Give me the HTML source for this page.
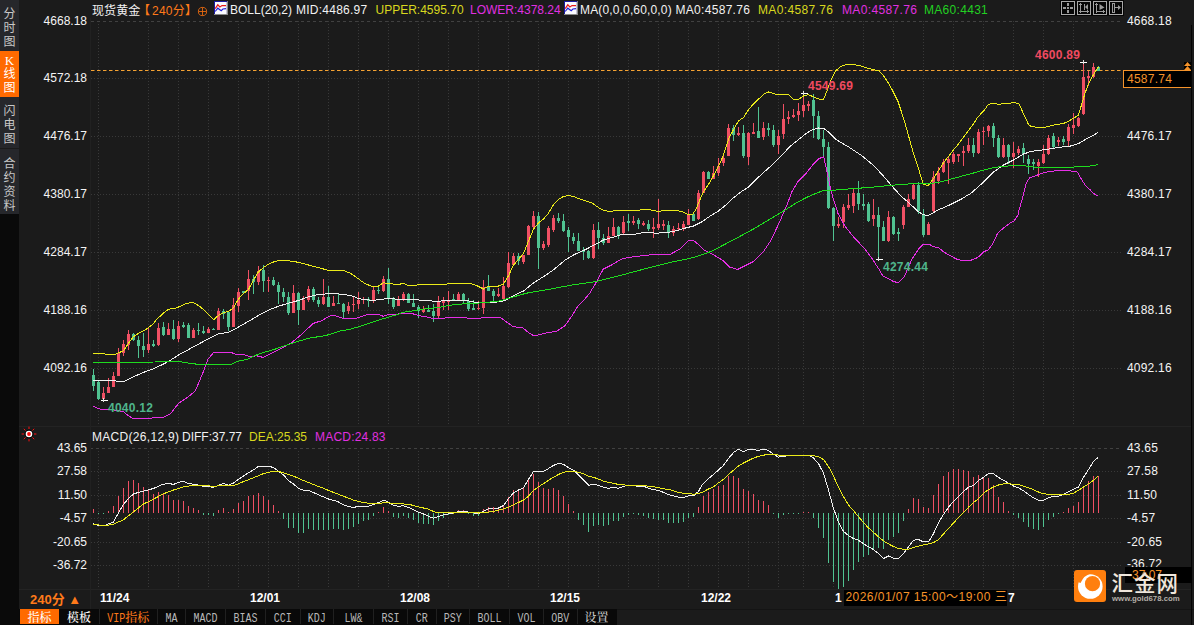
<!DOCTYPE html>
<html><head><meta charset="utf-8">
<style>
html,body{margin:0;padding:0;background:#1b1b1b;}
body{width:1194px;height:625px;position:relative;overflow:hidden;font-family:"Liberation Sans","Noto Sans CJK SC",sans-serif;font-size:12px;color:#f2f2f2;}
.a{position:absolute;white-space:nowrap;line-height:14px;}
.side{position:absolute;left:0;width:19px;background:#26272b;color:#c8c8c8;}
.side span{position:absolute;left:3.5px;width:12px;font-size:12px;line-height:14px;text-align:center;}
.lab{position:absolute;white-space:nowrap;font-size:12px;line-height:12px;color:#f4f4f4;}
.ll{width:87px;left:0;text-align:right;}
.rl{left:1127px;letter-spacing:0.2px;}
.hdr{position:absolute;top:3px;height:15px;line-height:15px;white-space:nowrap;font-size:12px;}
.tab{position:absolute;top:609px;height:15px;color:#b8b8b8;font-size:12px;line-height:15px;text-align:center;white-space:nowrap;}
.cj{font-family:"Noto Serif CJK SC","Noto Sans CJK SC",serif;font-size:12px;font-weight:500;display:inline-block;}
.ms{font-family:"Liberation Mono",monospace;font-size:10px;display:inline-block;position:relative;top:0px;transform:scale(1,1.25);transform-origin:50% 60%;}
.date{position:absolute;top:591px;font-weight:bold;font-size:12px;line-height:14px;color:#fff;}
.mk{position:absolute;font-weight:bold;font-size:12px;line-height:12px;white-space:nowrap;letter-spacing:0.25px;}
</style></head><body>
<svg width="1194" height="625" viewBox="0 0 1194 625" style="position:absolute;left:0;top:0" shape-rendering="crispEdges">
<g stroke="#393939" stroke-width="1" stroke-dasharray="1 2" fill="none">
<line x1="98.5" y1="21" x2="98.5" y2="424"/>
<line x1="98.5" y1="451" x2="98.5" y2="588"/>
<line x1="148.5" y1="21" x2="148.5" y2="424"/>
<line x1="148.5" y1="451" x2="148.5" y2="588"/>
<line x1="178.5" y1="21" x2="178.5" y2="424"/>
<line x1="178.5" y1="451" x2="178.5" y2="588"/>
<line x1="208.5" y1="21" x2="208.5" y2="424"/>
<line x1="208.5" y1="451" x2="208.5" y2="588"/>
<line x1="238.5" y1="21" x2="238.5" y2="424"/>
<line x1="238.5" y1="451" x2="238.5" y2="588"/>
<line x1="268.5" y1="21" x2="268.5" y2="424"/>
<line x1="268.5" y1="451" x2="268.5" y2="588"/>
<line x1="298.5" y1="21" x2="298.5" y2="424"/>
<line x1="298.5" y1="451" x2="298.5" y2="588"/>
<line x1="328.5" y1="21" x2="328.5" y2="424"/>
<line x1="328.5" y1="451" x2="328.5" y2="588"/>
<line x1="358.5" y1="21" x2="358.5" y2="424"/>
<line x1="358.5" y1="451" x2="358.5" y2="588"/>
<line x1="388.5" y1="21" x2="388.5" y2="424"/>
<line x1="388.5" y1="451" x2="388.5" y2="588"/>
<line x1="418.5" y1="21" x2="418.5" y2="424"/>
<line x1="418.5" y1="451" x2="418.5" y2="588"/>
<line x1="448.5" y1="21" x2="448.5" y2="424"/>
<line x1="448.5" y1="451" x2="448.5" y2="588"/>
<line x1="478.5" y1="21" x2="478.5" y2="424"/>
<line x1="478.5" y1="451" x2="478.5" y2="588"/>
<line x1="508.5" y1="21" x2="508.5" y2="424"/>
<line x1="508.5" y1="451" x2="508.5" y2="588"/>
<line x1="538.5" y1="21" x2="538.5" y2="424"/>
<line x1="538.5" y1="451" x2="538.5" y2="588"/>
<line x1="568.5" y1="21" x2="568.5" y2="424"/>
<line x1="568.5" y1="451" x2="568.5" y2="588"/>
<line x1="598.5" y1="21" x2="598.5" y2="424"/>
<line x1="598.5" y1="451" x2="598.5" y2="588"/>
<line x1="628.5" y1="21" x2="628.5" y2="424"/>
<line x1="628.5" y1="451" x2="628.5" y2="588"/>
<line x1="658.5" y1="21" x2="658.5" y2="424"/>
<line x1="658.5" y1="451" x2="658.5" y2="588"/>
<line x1="688.5" y1="21" x2="688.5" y2="424"/>
<line x1="688.5" y1="451" x2="688.5" y2="588"/>
<line x1="718.5" y1="21" x2="718.5" y2="424"/>
<line x1="718.5" y1="451" x2="718.5" y2="588"/>
<line x1="748.5" y1="21" x2="748.5" y2="424"/>
<line x1="748.5" y1="451" x2="748.5" y2="588"/>
<line x1="778.5" y1="21" x2="778.5" y2="424"/>
<line x1="778.5" y1="451" x2="778.5" y2="588"/>
<line x1="803.5" y1="21" x2="803.5" y2="424"/>
<line x1="803.5" y1="451" x2="803.5" y2="588"/>
<line x1="833.5" y1="21" x2="833.5" y2="424"/>
<line x1="833.5" y1="451" x2="833.5" y2="588"/>
<line x1="863.5" y1="21" x2="863.5" y2="424"/>
<line x1="863.5" y1="451" x2="863.5" y2="588"/>
<line x1="893.5" y1="21" x2="893.5" y2="424"/>
<line x1="893.5" y1="451" x2="893.5" y2="588"/>
<line x1="923.5" y1="21" x2="923.5" y2="424"/>
<line x1="923.5" y1="451" x2="923.5" y2="588"/>
<line x1="953.5" y1="21" x2="953.5" y2="424"/>
<line x1="953.5" y1="451" x2="953.5" y2="588"/>
<line x1="983.5" y1="21" x2="983.5" y2="424"/>
<line x1="983.5" y1="451" x2="983.5" y2="588"/>
<line x1="1013.5" y1="21" x2="1013.5" y2="424"/>
<line x1="1013.5" y1="451" x2="1013.5" y2="588"/>
<line x1="1043.5" y1="21" x2="1043.5" y2="424"/>
<line x1="1043.5" y1="451" x2="1043.5" y2="588"/>
<line x1="1073.5" y1="21" x2="1073.5" y2="424"/>
<line x1="1073.5" y1="451" x2="1073.5" y2="588"/>
<line x1="91" y1="78.5" x2="1122" y2="78.5"/>
<line x1="91" y1="136.5" x2="1122" y2="136.5"/>
<line x1="91" y1="194.5" x2="1122" y2="194.5"/>
<line x1="91" y1="252.5" x2="1122" y2="252.5"/>
<line x1="91" y1="310.5" x2="1122" y2="310.5"/>
<line x1="91" y1="368.5" x2="1122" y2="368.5"/>
<line x1="91" y1="471.5" x2="1122" y2="471.5"/>
<line x1="91" y1="495.5" x2="1122" y2="495.5"/>
<line x1="91" y1="518.5" x2="1122" y2="518.5"/>
<line x1="91" y1="542.5" x2="1122" y2="542.5"/>
<line x1="91" y1="565.5" x2="1122" y2="565.5"/>
</g>
<g stroke="#414141" stroke-width="1" stroke-dasharray="3 3" fill="none">
<line x1="91" y1="21.5" x2="1122" y2="21.5"/>
<line x1="90" y1="448.5" x2="1122" y2="448.5"/>
</g>
<g stroke="#232323" stroke-width="1" fill="none">
<line x1="19" y1="426.5" x2="1191" y2="426.5"/>
<line x1="19" y1="589.5" x2="1191" y2="589.5"/>
<line x1="19" y1="609.5" x2="1194" y2="609.5" stroke="#141414"/>
<line x1="90.5" y1="18" x2="90.5" y2="609" stroke="#212121"/>
</g>
<line x1="91" y1="70.5" x2="1124" y2="70.5" stroke="#f5a232" stroke-width="1" stroke-dasharray="3.5 2.5" shape-rendering="auto"/>
<rect x="93" y="509" width="1" height="4" fill="#f05064"/>
<rect x="98" y="513" width="1" height="1" fill="#50c391"/>
<rect x="103" y="513" width="1" height="1" fill="#50c391"/>
<rect x="108" y="511" width="1" height="2" fill="#f05064"/>
<rect x="113" y="506" width="1" height="7" fill="#f05064"/>
<rect x="118" y="496" width="1" height="17" fill="#f05064"/>
<rect x="123" y="488" width="1" height="25" fill="#f05064"/>
<rect x="128" y="481" width="1" height="32" fill="#f05064"/>
<rect x="133" y="480" width="1" height="33" fill="#f05064"/>
<rect x="138" y="483" width="1" height="30" fill="#f05064"/>
<rect x="143" y="487" width="1" height="26" fill="#f05064"/>
<rect x="148" y="490" width="1" height="23" fill="#f05064"/>
<rect x="153" y="494" width="1" height="19" fill="#f05064"/>
<rect x="158" y="492" width="1" height="21" fill="#f05064"/>
<rect x="163" y="494" width="1" height="19" fill="#f05064"/>
<rect x="168" y="495" width="1" height="18" fill="#f05064"/>
<rect x="173" y="500" width="1" height="13" fill="#f05064"/>
<rect x="178" y="500" width="1" height="13" fill="#f05064"/>
<rect x="183" y="501" width="1" height="12" fill="#f05064"/>
<rect x="188" y="506" width="1" height="7" fill="#f05064"/>
<rect x="193" y="508" width="1" height="5" fill="#f05064"/>
<rect x="198" y="510" width="1" height="3" fill="#f05064"/>
<rect x="203" y="513" width="1" height="2" fill="#50c391"/>
<rect x="208" y="513" width="1" height="2" fill="#50c391"/>
<rect x="213" y="513" width="1" height="3" fill="#50c391"/>
<rect x="218" y="510" width="1" height="3" fill="#f05064"/>
<rect x="223" y="508" width="1" height="5" fill="#f05064"/>
<rect x="228" y="512" width="1" height="1" fill="#f05064"/>
<rect x="233" y="509" width="1" height="4" fill="#f05064"/>
<rect x="238" y="503" width="1" height="10" fill="#f05064"/>
<rect x="243" y="501" width="1" height="12" fill="#f05064"/>
<rect x="248" y="496" width="1" height="17" fill="#f05064"/>
<rect x="253" y="495" width="1" height="18" fill="#f05064"/>
<rect x="258" y="493" width="1" height="20" fill="#f05064"/>
<rect x="263" y="496" width="1" height="17" fill="#f05064"/>
<rect x="268" y="500" width="1" height="13" fill="#f05064"/>
<rect x="273" y="505" width="1" height="8" fill="#f05064"/>
<rect x="278" y="511" width="1" height="2" fill="#f05064"/>
<rect x="283" y="513" width="1" height="6" fill="#50c391"/>
<rect x="288" y="513" width="1" height="15" fill="#50c391"/>
<rect x="293" y="513" width="1" height="15" fill="#50c391"/>
<rect x="298" y="513" width="1" height="20" fill="#50c391"/>
<rect x="303" y="513" width="1" height="20" fill="#50c391"/>
<rect x="308" y="513" width="1" height="16" fill="#50c391"/>
<rect x="313" y="513" width="1" height="17" fill="#50c391"/>
<rect x="318" y="513" width="1" height="17" fill="#50c391"/>
<rect x="323" y="513" width="1" height="17" fill="#50c391"/>
<rect x="328" y="513" width="1" height="17" fill="#50c391"/>
<rect x="333" y="513" width="1" height="16" fill="#50c391"/>
<rect x="338" y="513" width="1" height="16" fill="#50c391"/>
<rect x="343" y="513" width="1" height="17" fill="#50c391"/>
<rect x="348" y="513" width="1" height="16" fill="#50c391"/>
<rect x="353" y="513" width="1" height="14" fill="#50c391"/>
<rect x="358" y="513" width="1" height="11" fill="#50c391"/>
<rect x="363" y="513" width="1" height="8" fill="#50c391"/>
<rect x="368" y="513" width="1" height="7" fill="#50c391"/>
<rect x="373" y="513" width="1" height="3" fill="#50c391"/>
<rect x="378" y="512" width="1" height="1" fill="#f05064"/>
<rect x="383" y="507" width="1" height="6" fill="#f05064"/>
<rect x="388" y="511" width="1" height="2" fill="#f05064"/>
<rect x="393" y="513" width="1" height="4" fill="#50c391"/>
<rect x="398" y="513" width="1" height="5" fill="#50c391"/>
<rect x="403" y="513" width="1" height="3" fill="#50c391"/>
<rect x="408" y="513" width="1" height="5" fill="#50c391"/>
<rect x="413" y="513" width="1" height="7" fill="#50c391"/>
<rect x="418" y="513" width="1" height="10" fill="#50c391"/>
<rect x="423" y="513" width="1" height="11" fill="#50c391"/>
<rect x="428" y="513" width="1" height="11" fill="#50c391"/>
<rect x="433" y="513" width="1" height="12" fill="#50c391"/>
<rect x="438" y="513" width="1" height="8" fill="#50c391"/>
<rect x="443" y="513" width="1" height="5" fill="#50c391"/>
<rect x="448" y="513" width="1" height="2" fill="#50c391"/>
<rect x="453" y="513" width="1" height="1" fill="#50c391"/>
<rect x="458" y="510" width="1" height="3" fill="#f05064"/>
<rect x="463" y="510" width="1" height="3" fill="#f05064"/>
<rect x="468" y="513" width="1" height="1" fill="#50c391"/>
<rect x="473" y="513" width="1" height="3" fill="#50c391"/>
<rect x="478" y="513" width="1" height="3" fill="#50c391"/>
<rect x="483" y="509" width="1" height="4" fill="#f05064"/>
<rect x="488" y="507" width="1" height="6" fill="#f05064"/>
<rect x="493" y="507" width="1" height="6" fill="#f05064"/>
<rect x="498" y="507" width="1" height="6" fill="#f05064"/>
<rect x="503" y="505" width="1" height="8" fill="#f05064"/>
<rect x="508" y="497" width="1" height="16" fill="#f05064"/>
<rect x="513" y="490" width="1" height="23" fill="#f05064"/>
<rect x="518" y="491" width="1" height="22" fill="#f05064"/>
<rect x="523" y="488" width="1" height="25" fill="#f05064"/>
<rect x="528" y="480" width="1" height="33" fill="#f05064"/>
<rect x="533" y="474" width="1" height="39" fill="#f05064"/>
<rect x="538" y="482" width="1" height="31" fill="#f05064"/>
<rect x="543" y="488" width="1" height="25" fill="#f05064"/>
<rect x="548" y="489" width="1" height="24" fill="#f05064"/>
<rect x="553" y="488" width="1" height="25" fill="#f05064"/>
<rect x="558" y="490" width="1" height="23" fill="#f05064"/>
<rect x="563" y="496" width="1" height="17" fill="#f05064"/>
<rect x="568" y="504" width="1" height="9" fill="#f05064"/>
<rect x="573" y="511" width="1" height="2" fill="#f05064"/>
<rect x="578" y="513" width="1" height="7" fill="#50c391"/>
<rect x="583" y="513" width="1" height="12" fill="#50c391"/>
<rect x="588" y="513" width="1" height="19" fill="#50c391"/>
<rect x="593" y="513" width="1" height="13" fill="#50c391"/>
<rect x="598" y="513" width="1" height="12" fill="#50c391"/>
<rect x="603" y="513" width="1" height="13" fill="#50c391"/>
<rect x="608" y="513" width="1" height="12" fill="#50c391"/>
<rect x="613" y="513" width="1" height="8" fill="#50c391"/>
<rect x="618" y="513" width="1" height="8" fill="#50c391"/>
<rect x="623" y="513" width="1" height="4" fill="#50c391"/>
<rect x="628" y="513" width="1" height="2" fill="#50c391"/>
<rect x="633" y="513" width="1" height="1" fill="#50c391"/>
<rect x="638" y="513" width="1" height="2" fill="#50c391"/>
<rect x="643" y="513" width="1" height="3" fill="#50c391"/>
<rect x="648" y="513" width="1" height="5" fill="#50c391"/>
<rect x="653" y="513" width="1" height="6" fill="#50c391"/>
<rect x="658" y="513" width="1" height="7" fill="#50c391"/>
<rect x="663" y="513" width="1" height="7" fill="#50c391"/>
<rect x="668" y="513" width="1" height="10" fill="#50c391"/>
<rect x="673" y="513" width="1" height="10" fill="#50c391"/>
<rect x="678" y="513" width="1" height="10" fill="#50c391"/>
<rect x="683" y="513" width="1" height="9" fill="#50c391"/>
<rect x="688" y="513" width="1" height="5" fill="#50c391"/>
<rect x="693" y="513" width="1" height="4" fill="#50c391"/>
<rect x="698" y="507" width="1" height="6" fill="#f05064"/>
<rect x="703" y="496" width="1" height="17" fill="#f05064"/>
<rect x="708" y="492" width="1" height="21" fill="#f05064"/>
<rect x="713" y="489" width="1" height="24" fill="#f05064"/>
<rect x="718" y="486" width="1" height="27" fill="#f05064"/>
<rect x="723" y="485" width="1" height="28" fill="#f05064"/>
<rect x="728" y="476" width="1" height="37" fill="#f05064"/>
<rect x="733" y="476" width="1" height="37" fill="#f05064"/>
<rect x="738" y="478" width="1" height="35" fill="#f05064"/>
<rect x="743" y="489" width="1" height="24" fill="#f05064"/>
<rect x="748" y="491" width="1" height="22" fill="#f05064"/>
<rect x="753" y="494" width="1" height="19" fill="#f05064"/>
<rect x="758" y="500" width="1" height="13" fill="#f05064"/>
<rect x="763" y="501" width="1" height="12" fill="#f05064"/>
<rect x="768" y="505" width="1" height="8" fill="#f05064"/>
<rect x="773" y="513" width="1" height="1" fill="#50c391"/>
<rect x="778" y="513" width="1" height="5" fill="#50c391"/>
<rect x="783" y="513" width="1" height="2" fill="#50c391"/>
<rect x="788" y="513" width="1" height="1" fill="#50c391"/>
<rect x="793" y="513" width="1" height="1" fill="#50c391"/>
<rect x="798" y="513" width="1" height="1" fill="#50c391"/>
<rect x="803" y="512" width="1" height="1" fill="#f05064"/>
<rect x="808" y="512" width="1" height="1" fill="#f05064"/>
<rect x="813" y="513" width="1" height="5" fill="#50c391"/>
<rect x="818" y="513" width="1" height="15" fill="#50c391"/>
<rect x="823" y="513" width="1" height="25" fill="#50c391"/>
<rect x="828" y="513" width="1" height="50" fill="#50c391"/>
<rect x="833" y="513" width="1" height="69" fill="#50c391"/>
<rect x="838" y="513" width="1" height="76" fill="#50c391"/>
<rect x="843" y="513" width="1" height="74" fill="#50c391"/>
<rect x="848" y="513" width="1" height="68" fill="#50c391"/>
<rect x="853" y="513" width="1" height="57" fill="#50c391"/>
<rect x="858" y="513" width="1" height="49" fill="#50c391"/>
<rect x="863" y="513" width="1" height="44" fill="#50c391"/>
<rect x="868" y="513" width="1" height="42" fill="#50c391"/>
<rect x="873" y="513" width="1" height="36" fill="#50c391"/>
<rect x="878" y="513" width="1" height="35" fill="#50c391"/>
<rect x="883" y="513" width="1" height="36" fill="#50c391"/>
<rect x="888" y="513" width="1" height="27" fill="#50c391"/>
<rect x="893" y="513" width="1" height="24" fill="#50c391"/>
<rect x="898" y="513" width="1" height="20" fill="#50c391"/>
<rect x="903" y="513" width="1" height="8" fill="#50c391"/>
<rect x="908" y="509" width="1" height="4" fill="#f05064"/>
<rect x="913" y="498" width="1" height="15" fill="#f05064"/>
<rect x="918" y="499" width="1" height="14" fill="#f05064"/>
<rect x="923" y="507" width="1" height="6" fill="#f05064"/>
<rect x="928" y="508" width="1" height="5" fill="#f05064"/>
<rect x="933" y="495" width="1" height="18" fill="#f05064"/>
<rect x="938" y="484" width="1" height="29" fill="#f05064"/>
<rect x="943" y="476" width="1" height="37" fill="#f05064"/>
<rect x="948" y="472" width="1" height="41" fill="#f05064"/>
<rect x="953" y="469" width="1" height="44" fill="#f05064"/>
<rect x="958" y="469" width="1" height="44" fill="#f05064"/>
<rect x="963" y="470" width="1" height="43" fill="#f05064"/>
<rect x="968" y="471" width="1" height="42" fill="#f05064"/>
<rect x="973" y="477" width="1" height="36" fill="#f05064"/>
<rect x="978" y="475" width="1" height="38" fill="#f05064"/>
<rect x="983" y="477" width="1" height="36" fill="#f05064"/>
<rect x="988" y="478" width="1" height="35" fill="#f05064"/>
<rect x="993" y="485" width="1" height="28" fill="#f05064"/>
<rect x="998" y="497" width="1" height="16" fill="#f05064"/>
<rect x="1003" y="502" width="1" height="11" fill="#f05064"/>
<rect x="1008" y="511" width="1" height="2" fill="#f05064"/>
<rect x="1013" y="513" width="1" height="2" fill="#50c391"/>
<rect x="1018" y="513" width="1" height="5" fill="#50c391"/>
<rect x="1023" y="513" width="1" height="9" fill="#50c391"/>
<rect x="1028" y="513" width="1" height="14" fill="#50c391"/>
<rect x="1033" y="513" width="1" height="16" fill="#50c391"/>
<rect x="1038" y="513" width="1" height="17" fill="#50c391"/>
<rect x="1043" y="513" width="1" height="14" fill="#50c391"/>
<rect x="1048" y="513" width="1" height="7" fill="#50c391"/>
<rect x="1053" y="513" width="1" height="4" fill="#50c391"/>
<rect x="1058" y="513" width="1" height="1" fill="#50c391"/>
<rect x="1063" y="512" width="1" height="1" fill="#f05064"/>
<rect x="1068" y="508" width="1" height="5" fill="#f05064"/>
<rect x="1073" y="506" width="1" height="7" fill="#f05064"/>
<rect x="1078" y="502" width="1" height="11" fill="#f05064"/>
<rect x="1083" y="488" width="1" height="25" fill="#f05064"/>
<rect x="1088" y="481" width="1" height="32" fill="#f05064"/>
<rect x="1093" y="476" width="1" height="37" fill="#f05064"/>
<rect x="1098" y="476" width="1" height="37" fill="#f05064"/>
<rect x="93" y="369" width="1" height="22" fill="#50c391"/>
<rect x="92" y="375" width="3" height="11" fill="#50c391"/>
<rect x="98" y="381" width="1" height="19" fill="#50c391"/>
<rect x="97" y="382" width="3" height="17" fill="#50c391"/>
<rect x="103" y="387" width="1" height="14" fill="#f05064"/>
<rect x="102" y="393" width="3" height="6" fill="#f05064"/>
<rect x="108" y="378" width="1" height="15" fill="#f05064"/>
<rect x="107" y="387" width="3" height="6" fill="#f05064"/>
<rect x="113" y="372" width="1" height="15" fill="#f05064"/>
<rect x="112" y="376" width="3" height="11" fill="#f05064"/>
<rect x="118" y="348" width="1" height="28" fill="#f05064"/>
<rect x="117" y="353" width="3" height="23" fill="#f05064"/>
<rect x="123" y="340" width="1" height="16" fill="#f05064"/>
<rect x="122" y="344" width="3" height="9" fill="#f05064"/>
<rect x="128" y="330" width="1" height="20" fill="#f05064"/>
<rect x="127" y="334" width="3" height="11" fill="#f05064"/>
<rect x="133" y="333" width="1" height="8" fill="#50c391"/>
<rect x="132" y="334" width="3" height="6" fill="#50c391"/>
<rect x="138" y="336" width="1" height="22" fill="#50c391"/>
<rect x="137" y="340" width="3" height="6" fill="#50c391"/>
<rect x="143" y="333" width="1" height="24" fill="#50c391"/>
<rect x="142" y="346" width="3" height="4" fill="#50c391"/>
<rect x="148" y="328" width="1" height="25" fill="#f05064"/>
<rect x="147" y="344" width="3" height="6" fill="#f05064"/>
<rect x="153" y="340" width="1" height="7" fill="#50c391"/>
<rect x="152" y="344" width="3" height="2" fill="#50c391"/>
<rect x="158" y="323" width="1" height="23" fill="#f05064"/>
<rect x="157" y="328" width="3" height="17" fill="#f05064"/>
<rect x="163" y="322" width="1" height="14" fill="#50c391"/>
<rect x="162" y="327" width="3" height="8" fill="#50c391"/>
<rect x="168" y="323" width="1" height="12" fill="#f05064"/>
<rect x="167" y="329" width="3" height="6" fill="#f05064"/>
<rect x="173" y="320" width="1" height="20" fill="#50c391"/>
<rect x="172" y="329" width="3" height="10" fill="#50c391"/>
<rect x="178" y="321" width="1" height="21" fill="#f05064"/>
<rect x="177" y="326" width="3" height="13" fill="#f05064"/>
<rect x="183" y="322" width="1" height="6" fill="#50c391"/>
<rect x="182" y="325" width="3" height="2" fill="#50c391"/>
<rect x="188" y="323" width="1" height="15" fill="#50c391"/>
<rect x="187" y="325" width="3" height="13" fill="#50c391"/>
<rect x="193" y="328" width="1" height="10" fill="#f05064"/>
<rect x="192" y="330" width="3" height="8" fill="#f05064"/>
<rect x="198" y="323" width="1" height="12" fill="#50c391"/>
<rect x="197" y="330" width="3" height="1" fill="#50c391"/>
<rect x="203" y="326" width="1" height="8" fill="#50c391"/>
<rect x="202" y="331" width="3" height="2" fill="#50c391"/>
<rect x="208" y="327" width="1" height="6" fill="#f05064"/>
<rect x="207" y="329" width="3" height="4" fill="#f05064"/>
<rect x="213" y="328" width="1" height="2" fill="#50c391"/>
<rect x="212" y="329" width="3" height="1" fill="#50c391"/>
<rect x="218" y="308" width="1" height="22" fill="#f05064"/>
<rect x="217" y="311" width="3" height="19" fill="#f05064"/>
<rect x="223" y="309" width="1" height="10" fill="#50c391"/>
<rect x="222" y="311" width="3" height="3" fill="#50c391"/>
<rect x="228" y="311" width="1" height="20" fill="#50c391"/>
<rect x="227" y="312" width="3" height="15" fill="#50c391"/>
<rect x="233" y="298" width="1" height="29" fill="#f05064"/>
<rect x="232" y="305" width="3" height="22" fill="#f05064"/>
<rect x="238" y="288" width="1" height="24" fill="#f05064"/>
<rect x="237" y="292" width="3" height="14" fill="#f05064"/>
<rect x="243" y="291" width="1" height="2" fill="#50c391"/>
<rect x="242" y="291" width="3" height="2" fill="#50c391"/>
<rect x="248" y="270" width="1" height="30" fill="#f05064"/>
<rect x="247" y="279" width="3" height="12" fill="#f05064"/>
<rect x="253" y="275" width="1" height="19" fill="#50c391"/>
<rect x="252" y="279" width="3" height="3" fill="#50c391"/>
<rect x="258" y="266" width="1" height="19" fill="#f05064"/>
<rect x="257" y="271" width="3" height="11" fill="#f05064"/>
<rect x="263" y="265" width="1" height="27" fill="#50c391"/>
<rect x="262" y="270" width="3" height="11" fill="#50c391"/>
<rect x="268" y="277" width="1" height="15" fill="#f05064"/>
<rect x="267" y="280" width="3" height="1" fill="#f05064"/>
<rect x="273" y="277" width="1" height="9" fill="#50c391"/>
<rect x="272" y="280" width="3" height="5" fill="#50c391"/>
<rect x="278" y="282" width="1" height="22" fill="#50c391"/>
<rect x="277" y="285" width="3" height="7" fill="#50c391"/>
<rect x="283" y="288" width="1" height="14" fill="#50c391"/>
<rect x="282" y="292" width="3" height="5" fill="#50c391"/>
<rect x="288" y="292" width="1" height="23" fill="#50c391"/>
<rect x="287" y="297" width="3" height="16" fill="#50c391"/>
<rect x="293" y="285" width="1" height="28" fill="#f05064"/>
<rect x="292" y="293" width="3" height="20" fill="#f05064"/>
<rect x="298" y="292" width="1" height="33" fill="#50c391"/>
<rect x="297" y="293" width="3" height="17" fill="#50c391"/>
<rect x="303" y="296" width="1" height="14" fill="#f05064"/>
<rect x="302" y="300" width="3" height="10" fill="#f05064"/>
<rect x="308" y="286" width="1" height="16" fill="#f05064"/>
<rect x="307" y="289" width="3" height="11" fill="#f05064"/>
<rect x="313" y="287" width="1" height="15" fill="#50c391"/>
<rect x="312" y="289" width="3" height="11" fill="#50c391"/>
<rect x="318" y="297" width="1" height="10" fill="#50c391"/>
<rect x="317" y="300" width="3" height="4" fill="#50c391"/>
<rect x="323" y="279" width="1" height="26" fill="#f05064"/>
<rect x="322" y="297" width="3" height="7" fill="#f05064"/>
<rect x="328" y="286" width="1" height="21" fill="#50c391"/>
<rect x="327" y="297" width="3" height="10" fill="#50c391"/>
<rect x="333" y="296" width="1" height="10" fill="#f05064"/>
<rect x="332" y="303" width="3" height="3" fill="#f05064"/>
<rect x="338" y="294" width="1" height="10" fill="#50c391"/>
<rect x="337" y="303" width="3" height="1" fill="#50c391"/>
<rect x="343" y="303" width="1" height="15" fill="#50c391"/>
<rect x="342" y="304" width="3" height="8" fill="#50c391"/>
<rect x="348" y="302" width="1" height="12" fill="#f05064"/>
<rect x="347" y="306" width="3" height="5" fill="#f05064"/>
<rect x="353" y="297" width="1" height="15" fill="#f05064"/>
<rect x="352" y="304" width="3" height="1" fill="#f05064"/>
<rect x="358" y="292" width="1" height="17" fill="#f05064"/>
<rect x="357" y="300" width="3" height="4" fill="#f05064"/>
<rect x="363" y="297" width="1" height="7" fill="#f05064"/>
<rect x="362" y="299" width="3" height="1" fill="#f05064"/>
<rect x="368" y="297" width="1" height="10" fill="#50c391"/>
<rect x="367" y="299" width="3" height="2" fill="#50c391"/>
<rect x="373" y="287" width="1" height="16" fill="#f05064"/>
<rect x="372" y="290" width="3" height="10" fill="#f05064"/>
<rect x="378" y="286" width="1" height="8" fill="#50c391"/>
<rect x="377" y="290" width="3" height="1" fill="#50c391"/>
<rect x="383" y="276" width="1" height="16" fill="#f05064"/>
<rect x="382" y="279" width="3" height="12" fill="#f05064"/>
<rect x="388" y="268" width="1" height="36" fill="#50c391"/>
<rect x="387" y="279" width="3" height="20" fill="#50c391"/>
<rect x="393" y="297" width="1" height="12" fill="#50c391"/>
<rect x="392" y="299" width="3" height="8" fill="#50c391"/>
<rect x="398" y="296" width="1" height="10" fill="#f05064"/>
<rect x="397" y="299" width="3" height="7" fill="#f05064"/>
<rect x="403" y="292" width="1" height="9" fill="#f05064"/>
<rect x="402" y="294" width="3" height="6" fill="#f05064"/>
<rect x="408" y="293" width="1" height="10" fill="#50c391"/>
<rect x="407" y="294" width="3" height="9" fill="#50c391"/>
<rect x="413" y="294" width="1" height="13" fill="#50c391"/>
<rect x="412" y="303" width="3" height="4" fill="#50c391"/>
<rect x="418" y="305" width="1" height="13" fill="#50c391"/>
<rect x="417" y="307" width="3" height="4" fill="#50c391"/>
<rect x="423" y="306" width="1" height="7" fill="#f05064"/>
<rect x="422" y="309" width="3" height="3" fill="#f05064"/>
<rect x="428" y="305" width="1" height="7" fill="#50c391"/>
<rect x="427" y="310" width="3" height="2" fill="#50c391"/>
<rect x="433" y="304" width="1" height="18" fill="#50c391"/>
<rect x="432" y="311" width="3" height="5" fill="#50c391"/>
<rect x="438" y="296" width="1" height="22" fill="#f05064"/>
<rect x="437" y="302" width="3" height="14" fill="#f05064"/>
<rect x="443" y="297" width="1" height="13" fill="#f05064"/>
<rect x="442" y="301" width="3" height="2" fill="#f05064"/>
<rect x="448" y="291" width="1" height="19" fill="#f05064"/>
<rect x="447" y="300" width="3" height="2" fill="#f05064"/>
<rect x="453" y="294" width="1" height="6" fill="#50c391"/>
<rect x="452" y="299" width="3" height="1" fill="#50c391"/>
<rect x="458" y="292" width="1" height="8" fill="#f05064"/>
<rect x="457" y="294" width="3" height="6" fill="#f05064"/>
<rect x="463" y="293" width="1" height="10" fill="#50c391"/>
<rect x="462" y="294" width="3" height="6" fill="#50c391"/>
<rect x="468" y="298" width="1" height="13" fill="#50c391"/>
<rect x="467" y="301" width="3" height="8" fill="#50c391"/>
<rect x="473" y="300" width="1" height="10" fill="#50c391"/>
<rect x="472" y="308" width="3" height="2" fill="#50c391"/>
<rect x="478" y="301" width="1" height="9" fill="#f05064"/>
<rect x="477" y="308" width="3" height="1" fill="#f05064"/>
<rect x="483" y="280" width="1" height="34" fill="#f05064"/>
<rect x="482" y="287" width="3" height="21" fill="#f05064"/>
<rect x="488" y="275" width="1" height="16" fill="#50c391"/>
<rect x="487" y="287" width="3" height="4" fill="#50c391"/>
<rect x="493" y="289" width="1" height="12" fill="#50c391"/>
<rect x="492" y="291" width="3" height="5" fill="#50c391"/>
<rect x="498" y="288" width="1" height="9" fill="#f05064"/>
<rect x="497" y="294" width="3" height="2" fill="#f05064"/>
<rect x="503" y="277" width="1" height="23" fill="#f05064"/>
<rect x="502" y="286" width="3" height="13" fill="#f05064"/>
<rect x="508" y="252" width="1" height="36" fill="#f05064"/>
<rect x="507" y="263" width="3" height="24" fill="#f05064"/>
<rect x="513" y="253" width="1" height="12" fill="#f05064"/>
<rect x="512" y="256" width="3" height="9" fill="#f05064"/>
<rect x="518" y="253" width="1" height="12" fill="#50c391"/>
<rect x="517" y="256" width="3" height="5" fill="#50c391"/>
<rect x="523" y="255" width="1" height="9" fill="#f05064"/>
<rect x="522" y="255" width="3" height="7" fill="#f05064"/>
<rect x="528" y="225" width="1" height="30" fill="#f05064"/>
<rect x="527" y="226" width="3" height="29" fill="#f05064"/>
<rect x="533" y="211" width="1" height="17" fill="#f05064"/>
<rect x="532" y="216" width="3" height="11" fill="#f05064"/>
<rect x="538" y="212" width="1" height="57" fill="#50c391"/>
<rect x="537" y="216" width="3" height="32" fill="#50c391"/>
<rect x="543" y="241" width="1" height="9" fill="#f05064"/>
<rect x="542" y="244" width="3" height="4" fill="#f05064"/>
<rect x="548" y="226" width="1" height="21" fill="#f05064"/>
<rect x="547" y="228" width="3" height="17" fill="#f05064"/>
<rect x="553" y="215" width="1" height="17" fill="#f05064"/>
<rect x="552" y="218" width="3" height="12" fill="#f05064"/>
<rect x="558" y="213" width="1" height="10" fill="#50c391"/>
<rect x="557" y="218" width="3" height="3" fill="#50c391"/>
<rect x="563" y="214" width="1" height="18" fill="#50c391"/>
<rect x="562" y="221" width="3" height="10" fill="#50c391"/>
<rect x="568" y="227" width="1" height="25" fill="#50c391"/>
<rect x="567" y="230" width="3" height="7" fill="#50c391"/>
<rect x="573" y="233" width="1" height="11" fill="#50c391"/>
<rect x="572" y="237" width="3" height="4" fill="#50c391"/>
<rect x="578" y="233" width="1" height="18" fill="#50c391"/>
<rect x="577" y="241" width="3" height="10" fill="#50c391"/>
<rect x="583" y="247" width="1" height="13" fill="#50c391"/>
<rect x="582" y="251" width="3" height="1" fill="#50c391"/>
<rect x="588" y="250" width="1" height="9" fill="#50c391"/>
<rect x="587" y="251" width="3" height="7" fill="#50c391"/>
<rect x="593" y="224" width="1" height="35" fill="#f05064"/>
<rect x="592" y="230" width="3" height="28" fill="#f05064"/>
<rect x="598" y="222" width="1" height="27" fill="#50c391"/>
<rect x="597" y="230" width="3" height="8" fill="#50c391"/>
<rect x="603" y="234" width="1" height="11" fill="#50c391"/>
<rect x="602" y="238" width="3" height="5" fill="#50c391"/>
<rect x="608" y="227" width="1" height="16" fill="#f05064"/>
<rect x="607" y="236" width="3" height="7" fill="#f05064"/>
<rect x="613" y="218" width="1" height="18" fill="#f05064"/>
<rect x="612" y="227" width="3" height="9" fill="#f05064"/>
<rect x="618" y="226" width="1" height="13" fill="#50c391"/>
<rect x="617" y="227" width="3" height="8" fill="#50c391"/>
<rect x="623" y="216" width="1" height="18" fill="#f05064"/>
<rect x="622" y="222" width="3" height="11" fill="#f05064"/>
<rect x="628" y="214" width="1" height="17" fill="#50c391"/>
<rect x="627" y="221" width="3" height="2" fill="#50c391"/>
<rect x="633" y="216" width="1" height="9" fill="#f05064"/>
<rect x="632" y="221" width="3" height="2" fill="#f05064"/>
<rect x="638" y="218" width="1" height="11" fill="#50c391"/>
<rect x="637" y="220" width="3" height="4" fill="#50c391"/>
<rect x="643" y="221" width="1" height="5" fill="#f05064"/>
<rect x="642" y="223" width="3" height="2" fill="#f05064"/>
<rect x="648" y="220" width="1" height="11" fill="#50c391"/>
<rect x="647" y="224" width="3" height="5" fill="#50c391"/>
<rect x="653" y="218" width="1" height="20" fill="#f05064"/>
<rect x="652" y="227" width="3" height="2" fill="#f05064"/>
<rect x="658" y="199" width="1" height="31" fill="#f05064"/>
<rect x="657" y="224" width="3" height="4" fill="#f05064"/>
<rect x="663" y="220" width="1" height="10" fill="#f05064"/>
<rect x="662" y="224" width="3" height="2" fill="#f05064"/>
<rect x="668" y="221" width="1" height="17" fill="#50c391"/>
<rect x="667" y="225" width="3" height="7" fill="#50c391"/>
<rect x="673" y="226" width="1" height="10" fill="#f05064"/>
<rect x="672" y="229" width="3" height="4" fill="#f05064"/>
<rect x="678" y="223" width="1" height="7" fill="#f05064"/>
<rect x="677" y="228" width="3" height="1" fill="#f05064"/>
<rect x="683" y="221" width="1" height="10" fill="#f05064"/>
<rect x="682" y="224" width="3" height="4" fill="#f05064"/>
<rect x="688" y="209" width="1" height="16" fill="#f05064"/>
<rect x="687" y="214" width="3" height="11" fill="#f05064"/>
<rect x="693" y="214" width="1" height="7" fill="#50c391"/>
<rect x="692" y="214" width="3" height="7" fill="#50c391"/>
<rect x="698" y="190" width="1" height="30" fill="#f05064"/>
<rect x="697" y="193" width="3" height="26" fill="#f05064"/>
<rect x="703" y="171" width="1" height="22" fill="#f05064"/>
<rect x="702" y="172" width="3" height="21" fill="#f05064"/>
<rect x="708" y="171" width="1" height="8" fill="#50c391"/>
<rect x="707" y="172" width="3" height="7" fill="#50c391"/>
<rect x="713" y="166" width="1" height="13" fill="#f05064"/>
<rect x="712" y="173" width="3" height="6" fill="#f05064"/>
<rect x="718" y="158" width="1" height="18" fill="#f05064"/>
<rect x="717" y="166" width="3" height="7" fill="#f05064"/>
<rect x="723" y="153" width="1" height="13" fill="#f05064"/>
<rect x="722" y="158" width="3" height="5" fill="#f05064"/>
<rect x="728" y="124" width="1" height="32" fill="#f05064"/>
<rect x="727" y="128" width="3" height="28" fill="#f05064"/>
<rect x="733" y="125" width="1" height="16" fill="#50c391"/>
<rect x="732" y="128" width="3" height="7" fill="#50c391"/>
<rect x="738" y="127" width="1" height="9" fill="#f05064"/>
<rect x="737" y="133" width="3" height="2" fill="#f05064"/>
<rect x="743" y="125" width="1" height="33" fill="#50c391"/>
<rect x="742" y="133" width="3" height="23" fill="#50c391"/>
<rect x="748" y="132" width="1" height="33" fill="#f05064"/>
<rect x="747" y="133" width="3" height="24" fill="#f05064"/>
<rect x="753" y="123" width="1" height="11" fill="#f05064"/>
<rect x="752" y="132" width="3" height="2" fill="#f05064"/>
<rect x="758" y="107" width="1" height="31" fill="#50c391"/>
<rect x="757" y="131" width="3" height="7" fill="#50c391"/>
<rect x="763" y="122" width="1" height="18" fill="#f05064"/>
<rect x="762" y="128" width="3" height="9" fill="#f05064"/>
<rect x="768" y="123" width="1" height="13" fill="#50c391"/>
<rect x="767" y="128" width="3" height="2" fill="#50c391"/>
<rect x="773" y="125" width="1" height="22" fill="#50c391"/>
<rect x="772" y="130" width="3" height="15" fill="#50c391"/>
<rect x="778" y="130" width="1" height="24" fill="#f05064"/>
<rect x="777" y="136" width="3" height="9" fill="#f05064"/>
<rect x="783" y="104" width="1" height="35" fill="#f05064"/>
<rect x="782" y="119" width="3" height="15" fill="#f05064"/>
<rect x="788" y="111" width="1" height="13" fill="#f05064"/>
<rect x="787" y="117" width="3" height="2" fill="#f05064"/>
<rect x="793" y="109" width="1" height="9" fill="#f05064"/>
<rect x="792" y="115" width="3" height="2" fill="#f05064"/>
<rect x="798" y="103" width="1" height="18" fill="#f05064"/>
<rect x="797" y="111" width="3" height="4" fill="#f05064"/>
<rect x="803" y="94" width="1" height="23" fill="#f05064"/>
<rect x="802" y="105" width="3" height="6" fill="#f05064"/>
<rect x="808" y="101" width="1" height="10" fill="#f05064"/>
<rect x="807" y="104" width="3" height="2" fill="#f05064"/>
<rect x="813" y="94" width="1" height="44" fill="#50c391"/>
<rect x="812" y="100" width="3" height="16" fill="#50c391"/>
<rect x="818" y="111" width="1" height="29" fill="#50c391"/>
<rect x="817" y="116" width="3" height="23" fill="#50c391"/>
<rect x="823" y="130" width="1" height="27" fill="#50c391"/>
<rect x="822" y="139" width="3" height="8" fill="#50c391"/>
<rect x="828" y="142" width="1" height="67" fill="#50c391"/>
<rect x="827" y="147" width="3" height="61" fill="#50c391"/>
<rect x="833" y="207" width="1" height="34" fill="#50c391"/>
<rect x="832" y="208" width="3" height="18" fill="#50c391"/>
<rect x="838" y="217" width="1" height="11" fill="#f05064"/>
<rect x="837" y="224" width="3" height="2" fill="#f05064"/>
<rect x="843" y="204" width="1" height="24" fill="#f05064"/>
<rect x="842" y="207" width="3" height="15" fill="#f05064"/>
<rect x="848" y="194" width="1" height="16" fill="#f05064"/>
<rect x="847" y="205" width="3" height="3" fill="#f05064"/>
<rect x="853" y="189" width="1" height="24" fill="#f05064"/>
<rect x="852" y="193" width="3" height="13" fill="#f05064"/>
<rect x="858" y="181" width="1" height="29" fill="#50c391"/>
<rect x="857" y="193" width="3" height="11" fill="#50c391"/>
<rect x="863" y="194" width="1" height="16" fill="#50c391"/>
<rect x="862" y="204" width="3" height="2" fill="#50c391"/>
<rect x="868" y="202" width="1" height="20" fill="#50c391"/>
<rect x="867" y="204" width="3" height="17" fill="#50c391"/>
<rect x="873" y="199" width="1" height="27" fill="#f05064"/>
<rect x="872" y="215" width="3" height="4" fill="#f05064"/>
<rect x="878" y="207" width="1" height="53" fill="#50c391"/>
<rect x="877" y="215" width="3" height="12" fill="#50c391"/>
<rect x="883" y="221" width="1" height="20" fill="#50c391"/>
<rect x="882" y="227" width="3" height="14" fill="#50c391"/>
<rect x="888" y="211" width="1" height="31" fill="#f05064"/>
<rect x="887" y="217" width="3" height="24" fill="#f05064"/>
<rect x="893" y="216" width="1" height="19" fill="#50c391"/>
<rect x="892" y="217" width="3" height="17" fill="#50c391"/>
<rect x="898" y="228" width="1" height="13" fill="#50c391"/>
<rect x="897" y="232" width="3" height="2" fill="#50c391"/>
<rect x="903" y="205" width="1" height="24" fill="#f05064"/>
<rect x="902" y="207" width="3" height="18" fill="#f05064"/>
<rect x="908" y="194" width="1" height="13" fill="#f05064"/>
<rect x="907" y="199" width="3" height="8" fill="#f05064"/>
<rect x="913" y="184" width="1" height="16" fill="#f05064"/>
<rect x="912" y="185" width="3" height="14" fill="#f05064"/>
<rect x="918" y="182" width="1" height="32" fill="#50c391"/>
<rect x="917" y="185" width="3" height="26" fill="#50c391"/>
<rect x="923" y="209" width="1" height="28" fill="#50c391"/>
<rect x="922" y="214" width="3" height="21" fill="#50c391"/>
<rect x="928" y="222" width="1" height="13" fill="#f05064"/>
<rect x="927" y="224" width="3" height="11" fill="#f05064"/>
<rect x="933" y="171" width="1" height="41" fill="#f05064"/>
<rect x="932" y="177" width="3" height="34" fill="#f05064"/>
<rect x="938" y="167" width="1" height="17" fill="#f05064"/>
<rect x="937" y="173" width="3" height="8" fill="#f05064"/>
<rect x="943" y="159" width="1" height="14" fill="#f05064"/>
<rect x="942" y="162" width="3" height="10" fill="#f05064"/>
<rect x="948" y="157" width="1" height="27" fill="#f05064"/>
<rect x="947" y="159" width="3" height="4" fill="#f05064"/>
<rect x="953" y="152" width="1" height="12" fill="#f05064"/>
<rect x="952" y="154" width="3" height="8" fill="#f05064"/>
<rect x="958" y="154" width="1" height="8" fill="#f05064"/>
<rect x="957" y="154" width="3" height="2" fill="#f05064"/>
<rect x="963" y="146" width="1" height="20" fill="#f05064"/>
<rect x="962" y="151" width="3" height="2" fill="#f05064"/>
<rect x="968" y="138" width="1" height="15" fill="#f05064"/>
<rect x="967" y="145" width="3" height="6" fill="#f05064"/>
<rect x="973" y="138" width="1" height="19" fill="#50c391"/>
<rect x="972" y="145" width="3" height="8" fill="#50c391"/>
<rect x="978" y="129" width="1" height="25" fill="#f05064"/>
<rect x="977" y="132" width="3" height="21" fill="#f05064"/>
<rect x="983" y="127" width="1" height="18" fill="#f05064"/>
<rect x="982" y="131" width="3" height="1" fill="#f05064"/>
<rect x="988" y="125" width="1" height="12" fill="#f05064"/>
<rect x="987" y="126" width="3" height="5" fill="#f05064"/>
<rect x="993" y="123" width="1" height="24" fill="#50c391"/>
<rect x="992" y="126" width="3" height="12" fill="#50c391"/>
<rect x="998" y="135" width="1" height="23" fill="#50c391"/>
<rect x="997" y="138" width="3" height="19" fill="#50c391"/>
<rect x="1003" y="138" width="1" height="20" fill="#f05064"/>
<rect x="1002" y="145" width="3" height="12" fill="#f05064"/>
<rect x="1008" y="144" width="1" height="20" fill="#50c391"/>
<rect x="1007" y="145" width="3" height="12" fill="#50c391"/>
<rect x="1013" y="142" width="1" height="26" fill="#f05064"/>
<rect x="1012" y="153" width="3" height="4" fill="#f05064"/>
<rect x="1018" y="146" width="1" height="9" fill="#f05064"/>
<rect x="1017" y="149" width="3" height="4" fill="#f05064"/>
<rect x="1023" y="143" width="1" height="20" fill="#50c391"/>
<rect x="1022" y="148" width="3" height="6" fill="#50c391"/>
<rect x="1028" y="155" width="1" height="19" fill="#50c391"/>
<rect x="1027" y="159" width="3" height="5" fill="#50c391"/>
<rect x="1033" y="159" width="1" height="11" fill="#50c391"/>
<rect x="1032" y="162" width="3" height="2" fill="#50c391"/>
<rect x="1038" y="159" width="1" height="18" fill="#f05064"/>
<rect x="1037" y="162" width="3" height="4" fill="#f05064"/>
<rect x="1043" y="145" width="1" height="19" fill="#f05064"/>
<rect x="1042" y="154" width="3" height="9" fill="#f05064"/>
<rect x="1048" y="135" width="1" height="20" fill="#f05064"/>
<rect x="1047" y="138" width="3" height="16" fill="#f05064"/>
<rect x="1053" y="133" width="1" height="16" fill="#50c391"/>
<rect x="1052" y="136" width="3" height="11" fill="#50c391"/>
<rect x="1058" y="137" width="1" height="9" fill="#f05064"/>
<rect x="1057" y="140" width="3" height="2" fill="#f05064"/>
<rect x="1063" y="136" width="1" height="9" fill="#50c391"/>
<rect x="1062" y="139" width="3" height="3" fill="#50c391"/>
<rect x="1068" y="124" width="1" height="22" fill="#f05064"/>
<rect x="1067" y="127" width="3" height="14" fill="#f05064"/>
<rect x="1073" y="113" width="1" height="21" fill="#f05064"/>
<rect x="1072" y="125" width="3" height="3" fill="#f05064"/>
<rect x="1078" y="117" width="1" height="10" fill="#f05064"/>
<rect x="1077" y="118" width="3" height="8" fill="#f05064"/>
<rect x="1083" y="62" width="1" height="53" fill="#f05064"/>
<rect x="1082" y="77" width="3" height="37" fill="#f05064"/>
<rect x="1088" y="71" width="1" height="15" fill="#f05064"/>
<rect x="1087" y="76" width="3" height="2" fill="#f05064"/>
<rect x="1093" y="63" width="1" height="15" fill="#f05064"/>
<rect x="1092" y="67" width="3" height="10" fill="#f05064"/>
<rect x="1098" y="66" width="1" height="5" fill="#50c391"/>
<rect x="1097" y="67" width="3" height="4" fill="#50c391"/>
<polyline fill="none" stroke="#f0f0f0" stroke-width="1" points="93.0,380.1 124.1,381.3 133.4,376.8 143.4,372.4 153.5,368.7 163.6,364.0 170.3,360.3 178.7,354.9 188.8,349.4 198.9,343.9 209.0,338.5 218.0,334.0 228.5,332.3 238.2,327.2 248.3,321.4 258.4,315.5 268.5,310.1 278.5,306.2 288.6,303.2 298.7,300.4 308.8,296.7 317.2,294.8 329.0,293.6 339.0,294.0 349.0,295.3 353.0,296.2 358.0,298.4 364.8,299.6 373.2,300.4 381.6,299.3 388.3,298.4 398.4,299.3 415.2,299.6 427.0,300.8 438.7,301.3 448.8,300.1 465.6,300.4 479.0,303.0 487.4,302.1 495.7,302.2 505.3,300.6 513.0,295.8 523.5,291.0 534.1,282.4 543.7,276.6 553.3,269.9 564.8,260.3 574.4,254.5 584.0,250.3 593.6,245.3 603.2,240.1 612.8,237.3 622.4,234.4 628.0,234.3 636.0,234.0 644.0,232.4 656.8,233.2 668.0,232.4 676.0,230.8 684.0,228.4 693.6,226.0 701.6,222.0 709.6,216.4 717.6,211.6 725.6,205.2 733.6,197.7 741.6,191.3 748.0,187.6 755.6,179.8 765.2,171.1 774.8,162.5 782.0,155.2 790.0,146.4 798.0,140.0 806.0,133.6 812.4,129.6 818.5,128.0 823.5,128.3 828.4,132.0 833.2,136.8 836.7,140.0 849.2,147.3 861.7,155.6 874.2,166.0 884.6,177.4 893.5,187.8 901.2,196.2 909.5,203.4 918.5,211.8 923.5,214.9 928.5,215.3 938.8,209.7 949.6,205.0 960.4,199.6 971.2,193.1 982.0,183.4 992.8,172.6 1003.5,165.0 1014.3,159.6 1023.0,154.2 1031.4,151.3 1044.9,149.7 1058.3,147.4 1069.5,146.3 1078.5,143.6 1085.2,139.6 1091.9,136.2 1098.0,132.4"/>
<polyline fill="none" stroke="#ebeb19" stroke-width="1" points="93.0,353.6 105.0,354.0 114.0,354.8 118.2,352.8 123.3,351.0 128.3,343.5 133.4,336.8 138.4,333.4 143.4,331.0 148.5,327.6 153.5,323.7 156.0,320.0 160.8,315.6 164.8,312.0 168.8,309.2 175.2,308.4 180.0,306.4 186.4,303.2 191.2,302.8 192.8,302.2 196.8,304.4 200.8,307.2 205.6,311.6 210.4,316.4 213.6,319.8 218.4,315.5 223.5,312.6 228.5,311.3 233.5,307.9 238.4,299.0 243.4,293.6 248.5,289.4 253.5,280.2 258.4,271.8 263.4,267.6 268.5,264.2 273.5,262.0 278.5,260.4 285.3,260.4 295.3,261.7 305.4,264.2 315.5,266.8 329.0,270.5 344.0,270.5 350.8,273.5 358.0,278.5 364.8,283.6 371.5,286.2 378.2,286.2 383.4,282.8 388.5,283.6 398.4,284.5 403.4,283.3 408.5,285.7 415.2,285.7 418.6,284.5 445.4,284.5 448.8,283.3 469.0,283.3 474.0,284.5 479.0,286.7 483.6,289.0 488.4,286.2 498.0,286.2 503.4,284.3 508.5,275.7 513.5,265.1 518.5,259.3 523.5,253.6 528.5,241.1 533.5,229.2 538.5,222.8 543.5,219.0 548.5,213.2 553.5,204.6 558.5,199.2 563.5,196.5 568.5,195.6 573.5,196.5 582.1,199.8 591.7,202.7 598.4,207.5 603.4,210.4 608.4,211.3 622.4,210.4 636.0,210.8 642.4,209.5 648.8,209.5 656.8,211.1 669.6,210.8 674.4,210.0 682.4,211.6 688.0,214.3 692.8,214.0 696.0,209.2 700.0,199.6 703.5,191.9 708.5,184.4 713.5,175.6 718.5,166.0 722.8,156.8 728.5,139.2 733.5,129.6 738.5,120.8 743.5,117.6 748.5,109.6 753.5,104.0 758.5,99.2 763.5,94.4 768.5,92.0 773.5,93.6 778.5,94.7 788.4,94.7 793.5,99.2 798.5,99.5 803.5,96.0 808.5,94.7 813.5,96.8 818.5,98.9 823.5,99.5 826.0,93.4 830.8,80.6 835.6,71.0 840.4,66.5 846.8,64.3 851.6,64.6 859.6,65.4 866.0,67.8 872.4,69.4 878.8,71.0 883.6,75.8 888.4,83.0 893.2,91.8 898.0,101.4 901.2,111.0 905.2,123.8 909.2,138.2 913.7,154.5 914.7,156.6 919.9,173.3 923.5,184.7 928.5,185.3 933.5,178.6 938.6,170.4 943.5,162.9 948.5,156.4 953.5,149.9 958.4,144.1 963.6,137.0 968.6,130.5 973.5,124.0 977.3,117.6 984.0,110.5 988.2,104.7 991.6,103.4 995.7,103.4 997.4,104.4 1000.8,104.4 1001.6,103.4 1010.8,103.4 1011.7,102.6 1015.8,102.6 1016.7,103.4 1018.8,103.4 1020.9,108.0 1023.4,113.5 1025.9,118.9 1028.4,124.3 1031.8,126.9 1045.2,127.3 1053.8,125.0 1063.5,123.5 1068.4,121.2 1073.6,118.3 1078.5,115.0 1081.8,103.8 1085.2,92.6 1088.6,83.6 1093.5,74.6 1098.4,66.8"/>
<polyline fill="none" stroke="#e62fe6" stroke-width="1" points="93.0,406.2 99.8,409.0 111.5,409.5 123.3,411.6 128.3,415.7 132.5,418.3 146.8,418.3 163.6,417.4 170.3,414.0 178.7,403.2 188.8,396.4 195.5,390.6 203.9,370.4 208.0,359.1 213.9,352.1 229.8,352.1 238.2,355.0 243.0,354.5 250.0,356.6 256.7,355.8 263.4,357.5 275.2,351.6 292.0,342.4 302.0,334.0 313.0,323.5 322.2,320.5 329.0,316.3 333.1,315.1 344.0,318.5 350.8,318.8 354.7,318.9 361.4,316.4 368.2,314.2 378.2,314.2 383.4,316.4 388.5,314.2 395.0,314.7 403.4,313.0 410.2,313.0 418.6,315.6 427.0,316.9 433.7,318.9 440.4,318.9 447.1,317.6 465.6,317.6 469.0,318.4 479.0,318.4 482.4,317.6 500.5,317.5 505.3,321.0 513.0,326.7 522.6,327.7 528.3,332.5 534.1,336.0 543.7,333.5 557.1,331.0 564.8,325.8 572.5,315.2 578.2,305.6 584.0,299.9 589.7,293.2 595.5,283.6 603.2,269.2 610.9,265.3 622.4,258.6 633.9,256.7 651.2,254.8 670.4,254.2 680.0,249.0 688.6,240.4 693.4,240.4 698.0,244.1 703.8,249.9 713.4,254.7 723.0,260.4 729.7,267.1 737.4,269.5 744.1,266.2 753.7,261.4 763.3,251.8 771.0,240.3 778.7,223.9 786.3,206.7 792.1,191.3 797.9,181.7 805.5,174.0 813.2,164.4 819.0,158.6 823.8,156.7 827.6,175.0 832.4,196.1 838.0,213.4 845.0,226.3 853.4,236.7 864.9,249.0 871.6,258.0 878.3,268.1 882.8,275.9 888.4,278.7 894.0,281.8 898.5,282.4 904.1,277.1 907.5,269.2 912.0,259.1 918.7,249.0 923.2,244.3 929.3,244.3 933.2,246.6 938.8,247.9 943.8,252.0 949.5,255.3 957.2,259.4 962.0,260.3 970.7,260.3 976.4,258.2 980.3,255.3 984.1,251.5 988.0,250.1 992.8,243.8 997.6,233.3 1001.4,229.9 1005.2,226.7 1010.0,223.2 1013.9,221.2 1018.0,215.0 1018.7,211.4 1023.0,196.3 1026.2,183.4 1029.4,178.0 1038.1,174.8 1046.0,172.1 1058.3,170.5 1068.4,170.5 1077.4,172.1 1081.8,179.9 1086.3,186.6 1089.7,189.3 1093.5,193.5 1098.0,196.0"/>
<polyline fill="none" stroke="#1edc1e" stroke-width="1" points="93.0,362.5 155.0,362.0 168.6,361.2 178.7,361.5 192.0,363.7 205.6,364.9 219.0,364.9 230.8,364.5 238.0,361.2 246.6,359.5 258.4,354.1 275.2,349.1 292.0,343.2 308.8,338.2 325.6,335.6 342.4,330.3 348.0,329.8 358.0,327.0 368.2,323.6 378.2,320.3 388.3,317.2 398.4,314.2 403.4,312.2 415.2,310.5 427.0,308.5 438.7,307.5 448.8,305.5 458.9,304.1 469.0,303.8 479.0,303.0 489.0,302.1 498.0,301.3 503.4,299.9 511.0,297.6 526.4,293.2 549.4,289.3 572.5,284.9 595.5,281.6 622.4,274.9 647.3,268.2 670.4,262.4 693.4,257.6 708.0,252.8 717.2,248.3 736.4,238.3 755.6,227.8 774.8,216.3 784.4,210.5 797.9,201.9 809.4,196.1 822.8,190.7 838.0,189.9 849.2,188.9 870.0,187.4 890.8,185.3 911.6,183.7 928.0,183.8 938.8,182.3 949.6,179.5 960.4,176.5 971.2,173.7 982.0,170.4 992.8,167.8 1003.5,166.1 1023.0,165.7 1035.9,167.2 1062.8,167.2 1080.7,166.9 1089.7,166.0 1098.0,164.7"/>
<polyline fill="none" stroke="#f0f0f0" stroke-width="1" points="93.0,523.6 98.0,525.3 104.8,525.3 113.2,522.3 118.4,513.0 123.4,504.6 128.3,498.8 133.4,494.0 138.4,492.4 143.4,491.2 148.5,490.0 155.2,487.8 161.9,484.5 168.5,483.3 173.5,484.5 178.5,482.3 183.4,481.1 188.5,483.6 195.5,484.5 203.4,486.2 213.5,487.3 218.5,485.3 223.4,483.6 228.4,485.3 233.0,483.3 238.4,479.4 243.5,476.1 248.5,472.7 253.5,469.9 258.6,466.3 270.0,466.3 275.0,468.5 283.4,474.9 288.5,480.6 293.5,484.0 298.6,488.3 303.6,490.4 308.6,490.4 318.7,494.9 328.8,499.1 337.2,501.3 345.6,505.8 353.5,507.5 358.5,506.3 368.5,506.3 374.7,504.1 379.8,502.1 384.0,499.9 388.5,502.5 393.5,505.1 398.6,506.3 403.4,505.8 408.5,507.5 413.5,509.7 418.6,512.2 423.4,513.9 428.5,516.4 433.5,518.1 438.6,516.4 443.6,514.7 448.6,513.9 453.5,513.0 458.7,511.4 463.8,511.4 468.8,512.2 473.8,513.0 478.5,513.9 483.6,511.4 488.4,508.8 493.5,508.0 498.5,508.0 503.6,505.5 508.4,498.8 513.5,492.9 518.4,490.0 523.5,487.8 528.5,479.4 533.5,471.5 543.5,471.5 548.5,468.5 553.5,465.5 558.6,463.1 563.4,464.3 568.5,467.7 573.5,470.2 578.6,475.2 583.6,480.3 588.6,485.3 593.5,484.1 598.5,485.3 603.4,487.3 608.5,488.3 613.5,487.3 618.5,488.3 623.6,486.2 628.4,485.3 638.5,486.2 643.6,486.2 648.4,488.3 653.5,489.5 658.4,490.4 663.5,492.4 668.5,494.6 673.5,495.9 678.6,497.1 683.5,497.4 688.5,495.9 693.5,495.9 698.6,491.2 701.8,485.3 708.5,478.6 713.5,474.4 718.6,469.9 723.4,465.5 728.5,458.4 733.5,452.6 738.5,449.2 743.4,451.7 748.5,449.5 753.5,449.5 758.5,450.4 763.6,449.2 768.4,450.4 773.5,454.2 778.5,457.1 783.6,456.4 788.4,455.4 809.2,455.6 813.4,457.9 818.6,463.8 823.5,473.2 828.4,489.7 833.4,508.0 838.6,522.6 843.5,531.5 848.4,535.5 853.6,538.6 858.5,540.2 863.5,543.8 868.4,546.6 873.6,549.6 878.5,553.6 883.5,558.6 888.4,556.0 893.6,558.3 898.5,558.3 903.4,553.6 908.6,546.6 913.6,540.2 918.5,539.5 923.4,541.9 928.6,541.9 933.4,533.9 938.6,522.6 943.5,514.4 948.5,507.3 953.4,501.4 958.6,496.3 963.5,491.6 968.4,487.3 973.4,485.4 978.6,480.3 983.5,477.4 988.4,473.7 993.6,473.7 998.5,477.4 1003.5,480.3 1008.4,483.1 1013.6,486.1 1018.5,487.8 1023.5,490.8 1028.4,494.4 1033.6,497.9 1038.5,500.3 1043.4,500.3 1048.6,497.9 1053.6,496.3 1058.5,496.3 1063.4,494.4 1068.6,491.6 1073.5,489.2 1078.5,487.1 1083.4,477.6 1088.6,469.4 1093.5,461.3 1097.8,457.7"/>
<polyline fill="none" stroke="#ebeb19" stroke-width="1" points="93.0,524.3 104.8,525.6 113.2,524.3 123.4,519.8 133.4,511.9 143.4,504.1 153.5,499.1 163.6,493.7 173.5,490.0 183.4,487.0 193.5,485.3 203.4,485.7 213.5,486.2 223.4,485.7 234.7,485.3 243.5,481.6 253.5,477.8 263.5,473.6 271.7,471.5 278.4,471.5 283.4,472.7 293.5,476.1 303.6,480.6 313.5,484.5 323.4,488.3 333.5,492.4 343.4,496.2 353.5,500.1 363.4,502.6 373.5,503.8 378.0,503.5 386.5,502.5 393.2,503.5 401.6,503.8 410.0,504.6 418.4,506.8 428.5,509.2 435.2,512.2 443.6,512.5 453.5,513.0 458.7,512.5 468.8,512.5 478.5,513.0 485.6,512.5 493.5,511.4 498.5,510.2 503.6,508.8 508.4,507.2 513.5,504.6 518.4,502.5 523.5,500.1 528.5,496.2 533.5,490.4 538.6,486.7 543.5,483.6 548.5,480.3 553.5,477.3 558.6,474.4 563.4,472.2 568.5,471.4 573.5,471.4 578.6,472.2 583.6,473.9 588.6,476.1 593.5,477.3 598.5,479.1 603.4,481.1 608.5,482.3 613.5,483.3 618.5,484.5 628.4,485.3 643.6,485.3 648.4,486.2 653.5,486.7 658.4,487.8 663.5,488.7 668.5,489.5 673.5,490.7 678.6,492.4 683.5,493.4 688.5,493.7 693.5,494.2 698.6,493.7 703.4,491.7 708.5,489.0 713.5,486.7 718.6,482.8 723.4,479.4 728.5,474.4 733.5,470.2 738.5,466.0 743.4,463.1 748.5,460.5 753.5,458.1 758.5,456.3 763.6,455.1 768.4,454.6 773.5,454.6 778.5,455.1 788.4,455.4 813.4,455.6 818.6,456.8 823.5,459.6 828.4,466.2 833.4,476.0 838.6,487.3 843.5,496.7 848.4,505.0 853.6,510.8 858.5,516.7 863.5,522.6 868.4,527.8 873.6,532.5 878.5,536.7 883.5,540.9 888.4,543.8 893.6,546.6 898.5,548.5 903.4,549.2 908.6,549.2 913.6,547.3 918.5,546.1 923.4,544.9 928.6,543.8 933.4,542.6 938.6,539.5 943.5,533.9 948.5,528.5 953.4,523.1 958.6,517.4 963.5,512.7 968.4,507.3 973.4,502.6 978.6,498.6 983.5,493.2 988.4,489.7 993.6,486.9 998.5,485.0 1003.5,483.8 1008.4,483.8 1018.5,484.5 1023.5,486.1 1028.4,487.8 1033.6,489.7 1038.5,492.0 1043.4,493.7 1048.6,494.4 1058.5,494.8 1063.4,494.8 1068.6,494.4 1073.5,493.2 1078.5,490.3 1083.4,487.1 1088.6,483.8 1093.5,480.3 1097.8,476.2"/>
<rect x="101" y="400" width="7" height="1" fill="#fff"/>
<rect x="103" y="398" width="1" height="4" fill="#ddd"/>
<rect x="801" y="93" width="7" height="1" fill="#fff"/>
<rect x="803" y="91" width="1" height="4" fill="#ddd"/>
<rect x="876" y="259" width="7" height="1" fill="#fff"/>
<rect x="878" y="257" width="1" height="4" fill="#ddd"/>
<rect x="1080" y="62" width="7" height="1" fill="#fff"/>
<rect x="1083" y="60" width="1" height="4" fill="#ddd"/>
</svg>
<!-- sidebar -->
<div class="side" style="top:0;height:51px"><span style="top:7px">分</span><span style="top:21px">时</span><span style="top:35px">图</span></div>
<div class="side" style="top:51px;height:46px;background:#ff6a00;color:#fff"><span style="top:3px;font-family:'Liberation Serif',serif;font-size:13px">K</span><span style="top:16px">线</span><span style="top:30px">图</span></div>
<div class="side" style="top:97px;height:51px"><span style="top:7px">闪</span><span style="top:21px">电</span><span style="top:35px">图</span></div>
<div class="side" style="top:149px;height:65px"><span style="top:8px">合</span><span style="top:22px">约</span><span style="top:36px">资</span><span style="top:50px">料</span></div>
<div style="position:absolute;left:0;top:214px;width:19px;height:411px;background:#0a0a0a"></div>
<div style="position:absolute;left:0;top:148px;width:19px;height:1px;background:#1b1b1b"></div>

<!-- header -->
<div class="hdr" style="left:92px;top:4px;color:#f2f2f2;letter-spacing:0.1px">现货黄金</div>
<div class="hdr" style="left:138px;top:4px;color:#ff7a1a">【</div><div class="hdr" style="left:152px;top:4px;color:#ff7a1a;letter-spacing:0.25px">240分</div><div class="hdr" style="left:185px;top:4px;color:#ff7a1a">】</div>
<div class="hdr" style="left:230px">BOLL(20,2)</div>
<div class="hdr" style="left:296px;letter-spacing:0.25px">MID:4486.97</div>
<div class="hdr" style="left:375.5px;color:#d8d81e">UPPER:4595.70</div>
<div class="hdr" style="left:470px;color:#e030e0">LOWER:4378.24</div>
<div class="hdr" style="left:580px;letter-spacing:0.15px">MA(0,0,0,60,0,0)</div>
<div class="hdr" style="left:675.5px;letter-spacing:0.3px">MA0:4587.76</div>
<div class="hdr" style="left:758px;color:#d8d81e;letter-spacing:0.35px">MA0:4587.76</div>
<div class="hdr" style="left:842px;color:#e030e0;letter-spacing:0.35px">MA0:4587.76</div>
<div class="hdr" style="left:924px;color:#22d022;letter-spacing:0.3px">MA60:4431</div>


<!-- header icons -->
<svg style="position:absolute;left:196.7px;top:5.8px" width="11" height="11" viewBox="0 0 11 11"><circle cx="5.5" cy="5.5" r="4.1" fill="none" stroke="#e86a10" stroke-width="0.9"/><path d="M1.5 5.5H9.5M5.5 1.5V9.5" stroke="#e86a10" stroke-width="0.9" fill="none"/></svg>
<svg style="position:absolute;left:214px;top:1px" width="14" height="14" viewBox="0 0 14 14"><rect x="0" y="0" width="14" height="14" fill="#8a8a8a"/><rect x="0" y="0" width="13" height="13" fill="#1a1aa0"/><rect x="1" y="1" width="12" height="12" fill="#fbfbff"/><rect x="12" y="1" width="1" height="12" fill="#c8c8d8"/><polyline points="1.2,7.6 3.8,3.8 5.9,5.9 8,4.6 12,4.6" fill="none" stroke="#e81818" stroke-width="1.2"/><polyline points="1.2,10.5 3.8,7.2 7.2,9.7 8.9,8 12,7.6" fill="none" stroke="#2020d8" stroke-width="1.2"/></svg>
<svg style="position:absolute;left:564px;top:1px" width="14" height="14" viewBox="0 0 14 14"><rect x="0" y="0" width="14" height="14" fill="#8a8a8a"/><rect x="0" y="0" width="13" height="13" fill="#1a1aa0"/><rect x="1" y="1" width="12" height="12" fill="#fbfbff"/><rect x="12" y="1" width="1" height="12" fill="#c8c8d8"/><polyline points="1.2,7.6 3.8,3.8 5.9,5.9 8,4.6 12,4.6" fill="none" stroke="#e81818" stroke-width="1.2"/><polyline points="1.2,10.5 3.8,7.2 7.2,9.7 8.9,8 12,7.6" fill="none" stroke="#2020d8" stroke-width="1.2"/></svg>
<!-- toolbar icons -->
<svg style="position:absolute;left:1060px;top:0" width="64" height="16" viewBox="0 0 64 16" shape-rendering="crispEdges">
<rect x="0" y="0" width="65" height="16" fill="#060606"/>
<g fill="none" stroke="#a8a8a8" stroke-width="1"><rect x="1.5" y="1.5" width="13" height="13"/><rect x="17.5" y="1.5" width="13" height="13"/><rect x="33.5" y="1.5" width="13" height="13"/><rect x="49.5" y="1.5" width="13" height="13"/></g>
<g fill="#9a9a9a">
<rect x="3" y="7" width="3" height="2"/><rect x="7" y="7" width="2" height="2"/><rect x="10" y="7" width="3" height="2"/><rect x="7" y="3" width="2" height="3"/><rect x="7" y="10" width="2" height="3"/>
<rect x="20" y="3" width="1" height="10"/><rect x="19" y="4" width="3" height="1"/><rect x="20" y="11" width="9" height="1"/><rect x="27" y="10" width="1" height="3"/><rect x="19" y="11" width="1" height="1"/><rect x="20" y="10" width="1" height="3"/>
<rect x="24" y="4" width="1" height="6"/>
<rect x="36" y="3" width="1" height="10"/><rect x="35" y="4" width="3" height="1"/><rect x="36" y="11" width="9" height="1"/><rect x="43" y="10" width="1" height="3"/><rect x="36" y="10" width="1" height="3"/>
<rect x="52" y="3" width="1" height="10"/><rect x="54" y="3" width="1" height="10"/><rect x="52" y="3" width="3" height="1"/><rect x="52" y="12" width="3" height="1"/><rect x="55" y="7" width="5" height="1"/>
</g>
<g fill="#9a9a9a" shape-rendering="auto"><path d="M28 4 L25 7 L28 10 Z"/><path d="M39.5 4 L44.5 7.5 L39.5 10 Z"/><path d="M58 5 L61 7.5 L58 10 Z"/></g>
</svg>
<!-- sun icon -->
<svg style="position:absolute;left:21px;top:426px" width="16" height="16" viewBox="0 0 16 16"><g stroke="#ff1010" stroke-width="1" fill="none"><path d="M8 0.6V3M8 13V15.4M0.6 8H3M13 8H15.4M2.8 2.8L4.5 4.5M11.5 11.5L13.2 13.2M13.2 2.8L11.5 4.5M2.8 13.2L4.5 11.5"/></g><circle cx="8" cy="8" r="4.3" fill="#000"/><circle cx="8" cy="8" r="3.3" fill="#fff"/><circle cx="8" cy="8" r="1.9" fill="#ff1010"/></svg>
<!-- left axis -->
<div class="lab ll" style="top:15px">4668.18</div>
<div class="lab ll" style="top:72px">4572.18</div>
<div class="lab ll" style="top:130px">4476.17</div>
<div class="lab ll" style="top:188px">4380.17</div>
<div class="lab ll" style="top:246px">4284.17</div>
<div class="lab ll" style="top:304px">4188.16</div>
<div class="lab ll" style="top:362px">4092.16</div>
<div class="lab rl" style="top:15px">4668.18</div>
<div class="lab rl" style="top:130px">4476.17</div>
<div class="lab rl" style="top:188px">4380.17</div>
<div class="lab rl" style="top:246px">4284.17</div>
<div class="lab rl" style="top:304px">4188.16</div>
<div class="lab rl" style="top:362px">4092.16</div>
<!-- macd axis -->
<div class="lab ll" style="top:442px">43.65</div>
<div class="lab ll" style="top:465px">27.58</div>
<div class="lab ll" style="top:489px">11.50</div>
<div class="lab ll" style="top:512px">-4.57</div>
<div class="lab ll" style="top:536px">-20.65</div>
<div class="lab ll" style="top:559px">-36.72</div>
<div class="lab rl" style="top:442px">43.65</div>
<div class="lab rl" style="top:465px">27.58</div>
<div class="lab rl" style="top:489px">11.50</div>
<div class="lab rl" style="top:512px">-4.57</div>
<div class="lab rl" style="top:536px">-20.65</div>
<div class="lab rl" style="top:558px">-36.72</div>

<!-- macd header -->
<div class="hdr" style="top:430px;left:92px;letter-spacing:0.3px">MACD(26,12,9)</div>
<div class="hdr" style="top:430px;left:182px">DIFF:37.77</div>
<div class="hdr" style="top:430px;left:249px;color:#d8d81e">DEA:25.35</div>
<div class="hdr" style="top:430px;left:315px;color:#e030e0;letter-spacing:0.2px">MACD:24.83</div>

<!-- price markers -->
<div class="mk" style="left:108px;top:402px;color:#4fb58b">4040.12</div>
<div class="mk" style="left:808px;top:80px;color:#f04a60">4549.69</div>
<div class="mk" style="left:883px;top:261px;color:#4fb58b">4274.44</div>
<div class="mk" style="left:1035px;top:49px;color:#f04a60">4600.89</div>

<!-- current price box -->
<div style="position:absolute;left:1123px;top:70px;width:68px;height:18px;border:1px solid #f5932a;border-right:none;background:#000;box-sizing:border-box"></div>
<div class="lab" style="left:1127px;top:73px;color:#f5932a;letter-spacing:0.25px">4587.74</div>
<div style="position:absolute;left:1184px;top:62px;width:7px;height:8px;background:#000"></div>
<svg style="position:absolute;left:1184px;top:62px" width="7" height="8" viewBox="0 0 7 8"><path d="M0 4 L3.5 0 L7 4 Z M0 8 L3.5 4 L7 8 Z" fill="#f5932a"/></svg>
<div style="position:absolute;left:1191px;top:25px;width:1px;height:600px;background:#050505"></div>

<!-- time axis -->
<div class="a" style="left:30px;top:592px;color:#ff7a1a;font-weight:bold;font-size:13px;line-height:16px">240分 ▲</div>
<div class="date" style="left:100px">11/24</div>
<div class="date" style="left:250px">12/01</div>
<div class="date" style="left:400px">12/08</div>
<div class="date" style="left:550px">12/15</div>
<div class="date" style="left:701px">12/22</div>
<div class="date" style="left:835px">1</div>
<div class="date" style="left:1008px">7</div>
<div style="position:absolute;left:844px;top:590px;width:163px;height:15.5px;background:#000"></div>
<div class="a" style="left:845.5px;top:590px;color:#f5932a;font-size:12px;line-height:15px;letter-spacing:0.45px">2026/01/07 15:00～19:00 三</div>

<!-- macd value box -->
<div style="position:absolute;left:1125px;top:567px;width:67px;height:16px;background:#000"></div>
<div class="lab" style="left:1128px;top:569px;color:#f5932a">-37.07</div>

<!-- tabs row -->
<div style="position:absolute;left:19px;top:609px;width:598px;height:16px;background:#090909"></div>
<div class="tab" style="left:20px;width:39px;background:#ff6a00;color:#fff"><span class="cj">指标</span></div>
<div class="tab" style="left:59px;width:40px;color:#fff"><span class="cj">模板</span></div>
<div class="tab" style="left:99.5px;width:57.5px;color:#ff7a1a"><span class="ms">VIP</span><span class="cj">指标</span></div>
<div class="tab" style="left:157px;width:28px"><span class="ms" style="top:2px;left:0.5px">MA</span></div>
<div class="tab" style="left:185px;width:40px"><span class="ms" style="top:2px;left:0.5px">MACD</span></div>
<div class="tab" style="left:225px;width:40px"><span class="ms" style="top:2px;left:0.5px">BIAS</span></div>
<div class="tab" style="left:265px;width:34.5px"><span class="ms" style="top:2px;left:0.5px">CCI</span></div>
<div class="tab" style="left:299.5px;width:33.5px"><span class="ms" style="top:2px;left:0.5px">KDJ</span></div>
<div class="tab" style="left:333px;width:40px"><span class="ms" style="top:2px;left:0.5px">LW&amp;</span></div>
<div class="tab" style="left:373px;width:34px"><span class="ms" style="top:2px;left:0.5px">RSI</span></div>
<div class="tab" style="left:407px;width:28.5px"><span class="ms" style="top:2px;left:0.5px">CR</span></div>
<div class="tab" style="left:435.5px;width:33.5px"><span class="ms" style="top:2px;left:0.5px">PSY</span></div>
<div class="tab" style="left:469px;width:40px"><span class="ms" style="top:2px;left:0.5px">BOLL</span></div>
<div class="tab" style="left:509px;width:34px"><span class="ms" style="top:2px;left:0.5px">VOL</span></div>
<div class="tab" style="left:543px;width:33.5px"><span class="ms" style="top:2px;left:0.5px">OBV</span></div>
<div class="tab" style="left:576.5px;width:40px;color:#d0d0d0"><span class="cj">设置</span></div>
<div style="position:absolute;left:99px;top:609px;width:1px;height:15px;background:#202020"></div>
<div style="position:absolute;left:157px;top:609px;width:1px;height:15px;background:#202020"></div>
<div style="position:absolute;left:185px;top:609px;width:1px;height:15px;background:#202020"></div>
<div style="position:absolute;left:225px;top:609px;width:1px;height:15px;background:#202020"></div>
<div style="position:absolute;left:265px;top:609px;width:1px;height:15px;background:#202020"></div>
<div style="position:absolute;left:299.5px;top:609px;width:1px;height:15px;background:#202020"></div>
<div style="position:absolute;left:333px;top:609px;width:1px;height:15px;background:#202020"></div>
<div style="position:absolute;left:373px;top:609px;width:1px;height:15px;background:#202020"></div>
<div style="position:absolute;left:407px;top:609px;width:1px;height:15px;background:#202020"></div>
<div style="position:absolute;left:435.5px;top:609px;width:1px;height:15px;background:#202020"></div>
<div style="position:absolute;left:469px;top:609px;width:1px;height:15px;background:#202020"></div>
<div style="position:absolute;left:509px;top:609px;width:1px;height:15px;background:#202020"></div>
<div style="position:absolute;left:543px;top:609px;width:1px;height:15px;background:#202020"></div>
<div style="position:absolute;left:576.5px;top:609px;width:1px;height:15px;background:#202020"></div>

<!-- watermark -->
<div style="position:absolute;left:1074px;top:570px;width:32px;height:32px;border-radius:3px;background:#ff7f0e"></div>
<svg style="position:absolute;left:1074px;top:570px" width="32" height="32" viewBox="0 0 32 32"><circle cx="16.3" cy="16.5" r="12.3" fill="#fff"/><circle cx="18.5" cy="13.7" r="7.6" fill="#ff7f0e"/><path d="M4 12 Q8 3 18 3 Q10 5 6.5 13 Z" fill="#ff7f0e"/></svg>
<div class="a" style="left:1111.5px;top:569px;font-size:21.5px;line-height:26px;color:#efe6dc;font-family:'Noto Sans CJK SC',sans-serif;letter-spacing:1px;font-weight:500">汇金网</div>
<div class="a" style="left:1112px;top:594px;font-size:7.8px;line-height:10px;color:#b4aea8;letter-spacing:0;font-weight:bold">www.gold678.com</div>
</body></html>
